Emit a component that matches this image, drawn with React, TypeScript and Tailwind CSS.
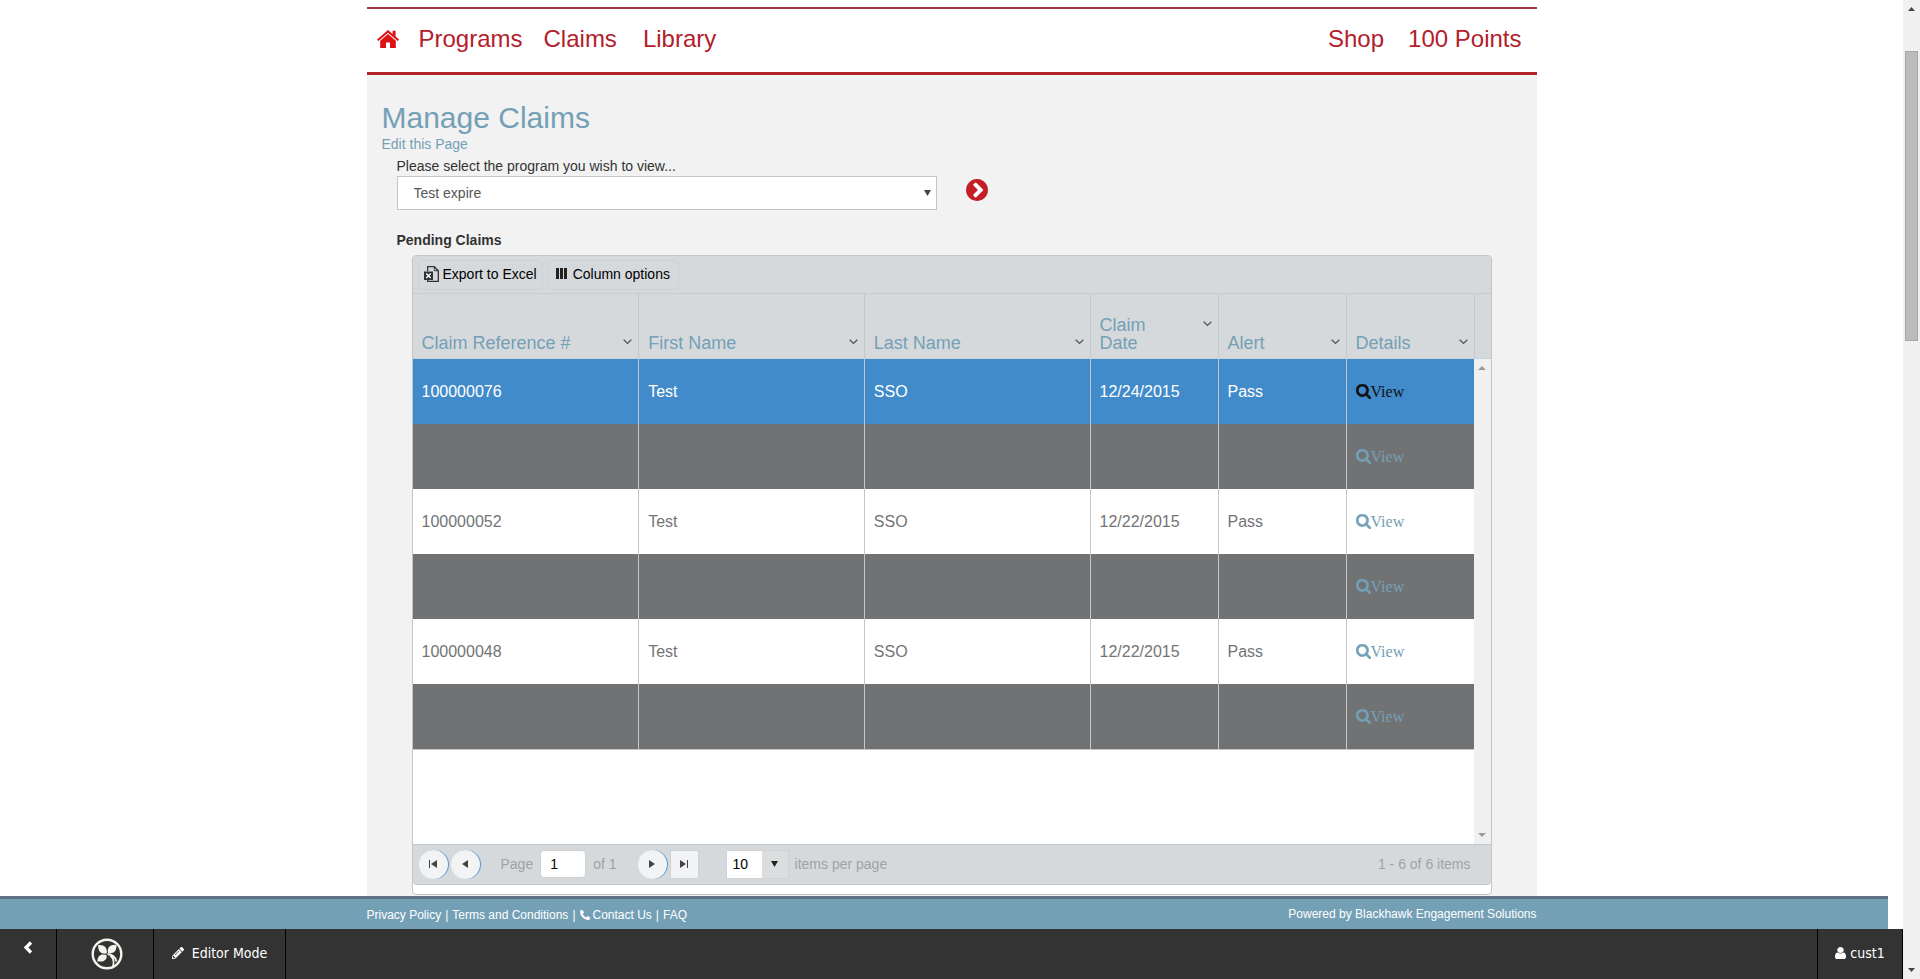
import React from "react";
import { FaPencilAlt, FaPhoneAlt } from "react-icons/fa";

type Claim = { ref: string; first: string; last: string; date: string; alert: string };

const claims: (Claim | null)[] = [
  { ref: "100000076", first: "Test", last: "SSO", date: "12/24/2015", alert: "Pass" },
  null,
  { ref: "100000052", first: "Test", last: "SSO", date: "12/22/2015", alert: "Pass" },
  null,
  { ref: "100000048", first: "Test", last: "SSO", date: "12/22/2015", alert: "Pass" },
  null,
];

const columns = ["Claim Reference #", "First Name", "Last Name", "Claim Date", "Alert", "Details"];

function HomeIcon() {
  return (
    <svg viewBox="0 0 22 18" className="h-[18px] w-[22px]" fill="currentColor" aria-hidden="true">
      <path d="M11 0 0 9.6l1.4 1.5L11 2.8l9.6 8.3L22 9.6l-3.4-3V.8h-3v3.3z" />
      <path d="M11 4 3.200 10.800V18h5.800v-5.500h4V18h5.800v-7.200z" />
    </svg>
  );
}

function GoIcon() {
  return (
    <svg viewBox="128 128 1536 1536" className="size-[22px]" fill="currentColor" aria-hidden="true">
      <circle cx="896" cy="896" r="650" fill="#fff" />
      <path d="M845 1395l454-454q19-19 19-45t-19-45l-454-454q-19-19-45-19t-45 19l-102 102q-19 19-19 45t19 45l307 307-307 307q-19 19-19 45t19 45l102 102q19 19 45 19t45-19zm819-499q0 209-103 385.5t-279.5 279.5-385.5 103-385.5-103-279.5-279.5-103-385.5 103-385.5 279.5-279.5 385.5-103 385.5 103 279.5 279.5 103 385.5z" />
    </svg>
  );
}

function SearchIcon() {
  return (
    <svg viewBox="0 128 1664 1664" className="size-[15px]" fill="currentColor" stroke="currentColor" strokeWidth="50" aria-hidden="true">
      <path d="M1152 832q0-185-131.5-316.5t-316.5-131.5-316.5 131.5-131.5 316.5 131.5 316.5 316.5 131.5 316.5-131.5 131.5-316.5zm512 832q0 52-38 90t-90 38q-54 0-90-38l-343-342q-179 124-399 124-143 0-273.5-55.5t-225-150-150-225-55.5-273.5 55.5-273.5 150-225 225-150 273.5-55.5 273.5 55.5 225 150 150 225 55.5 273.5q0 220-124 399l343 343q37 37 37 90z" />
    </svg>
  );
}

function UserIcon() {
  return (
    <svg viewBox="256 128 1280 1536" className="h-3 w-[11px]" preserveAspectRatio="none" fill="currentColor" aria-hidden="true">
      <path d="M1536 1399q0 109-62.5 187t-150.5 78h-854q-88 0-150.5-78t-62.5-187q0-85 8.5-160.5t31.5-152 58.5-131 94-89 134.5-34.5q131 128 313 128t313-128q76 0 134.5 34.5t94 89 58.5 131 31.5 152 8.5 160.5zm-256-887q0 159-112.5 271.5t-271.5 112.5-271.5-112.5-112.5-271.5 112.5-271.5 271.5-112.5 271.5 112.5 112.5 271.5z" />
    </svg>
  );
}

function ExcelIcon() {
  return (
    <svg viewBox="0 0 15 16" className="h-4 w-[15px]" fill="none" aria-hidden="true">
      <path d="M3.7 5V.7h6.6l4 4v10.6H3.7V14" stroke="#333" strokeWidth="1.3" />
      <path d="M10.3.7v4h4" stroke="#333" strokeWidth="1" />
      <rect y="5.5" width="9" height="8.5" fill="#333" />
      <path d="M2.3 7.5 6.7 12M6.7 7.5 2.3 12" stroke="#fff" strokeWidth="1.4" />
    </svg>
  );
}

function ColumnsIcon() {
  return (
    <svg viewBox="0 0 11 11" className="size-[11px]" fill="#222" aria-hidden="true">
      <path d="M0 0h3v11H0zM4 0h3v11H4zM8 0h3v11H8z" />
    </svg>
  );
}

function Caret() {
  return (
    <svg viewBox="0 0 9 6" className="h-[6px] w-[9px]" fill="none" stroke="#555" strokeWidth="1.4" aria-hidden="true">
      <path d="M.7.8 4.5 4.4 8.3.8" />
    </svg>
  );
}

function Triangle({ dir, className }: { dir: "up" | "down"; className: string }) {
  return (
    <svg viewBox="0 0 8 4" preserveAspectRatio="none" className={className} fill="currentColor" aria-hidden="true">
      <path d={dir === "up" ? "M0 4 4 0l4 4z" : "M0 0h8L4 4z"} />
    </svg>
  );
}

function PagerIcon({ d }: { d: string }) {
  return (
    <svg viewBox="0 0 8 8" className="size-2" fill="#444" aria-hidden="true">
      <path d={d} />
    </svg>
  );
}

function LeafLogo() {
  return (
    <svg viewBox="0 0 32 32" className="size-8" aria-hidden="true">
      <circle cx="16" cy="16" r="14.3" fill="none" stroke="#f4f4ee" strokeWidth="2.4" />
      <g fill="#f4f4ee">
        <path d="M15.800 15.600C10 16.500 6.800 13 7.200 7c6-.6 9.300 2.600 8.600 8.600z" />
        <path d="M17 15c-1.200-5.500 2-8.800 8.400-8.300.6 6-2.600 9.300-8.400 8.300z" />
        <path d="M15.500 17c.8 5.200-3 7.500-9.200 6.200.2-5.500 3.800-8 9.200-6.200z" />
      </g>
      <path d="M16.500 16c4.500.4 7.800 3 9 7.500M19.500 17.500c3.500 3.500 4 8 1.500 12.500" fill="none" stroke="#f4f4ee" strokeWidth="1.800" />
    </svg>
  );
}

const round = "flex size-[29px] items-center justify-center rounded-full bg-[#f1f3f5] shadow-[1px_0_0_#5b96cc]";
const square = "flex size-[29px] items-center justify-center rounded-[2px] border border-[#d0d2d4] bg-[#f1f3f5]";

export default function App() {
  return (
    <div className="flex min-h-screen bg-white font-['Liberation_Sans',Arial,sans-serif] text-sm text-[#333]">
      <div className="flex min-w-0 flex-1 flex-col">
        <div className="mx-auto flex w-full max-w-[1170px] flex-1 flex-col pt-[7px]">
          <nav className="flex h-[68px] items-center border-t-2 border-b-3 border-t-[#a03444] border-b-[#b4232a] px-[15px] pb-1 text-2xl text-[#b3202b]">
            <a href="#home" aria-label="Home" className="-ml-[5px] text-[#dc1216]">
              <HomeIcon />
            </a>
            <a href="#programs" className="ml-5">Programs</a>
            <a href="#claims" className="ml-[21px]">Claims</a>
            <a href="#library" className="ml-[26px]">Library</a>
            <a href="#shop" className="ml-auto">Shop</a>
            <a href="#points" className="ml-6">100 Points</a>
          </nav>

          <main className="flex-1 bg-[#f2f2f2] px-[15px] pt-[25px]">
            <h1 className="text-[30px] leading-9 text-[#74a0b6]">Manage Claims</h1>
            <a href="#edit" className="block leading-4 text-[#74a0b6]">Edit this Page</a>
            <div className="px-[15px] pt-1">
              <label htmlFor="program" className="block leading-5">Please select the program you wish to view...</label>
              <div className="flex items-center">
                <div className="relative w-[540px]">
                  <select id="program" className="block h-[34px] w-full appearance-none border border-[#c4c4c4] bg-white pl-4 text-[#555]">
                    <option>Test expire</option>
                  </select>
                  <Triangle dir="down" className="pointer-events-none absolute top-[14px] right-[6px] h-[6px] w-[7px] text-[#444]" />
                </div>
                <button type="button" aria-label="Go" className="mb-[6px] ml-[29px] text-[#c41f26]">
                  <GoIcon />
                </button>
              </div>
              <h2 className="pt-5 leading-5 font-bold">Pending Claims</h2>

              <section className="mx-[15px] mt-[5px] overflow-hidden rounded-[4px] border border-[#c5c5c7] bg-white pb-[9px]">
                <div className="flex h-[38px] items-center gap-1 border-b border-[#c8cbcd] bg-[#d6d9dc] px-[5px] text-black">
                  <button type="button" className="flex h-[30px] items-center gap-1 rounded-[4px] border border-[#cdd1d4] px-[5px] pb-[2px]">
                    <ExcelIcon />
                    Export to Excel
                  </button>
                  <button type="button" className="flex h-[30px] items-center gap-[6px] rounded-[4px] border border-[#cdd1d4] px-2 pb-[2px]">
                    <ColumnsIcon />
                    Column options
                  </button>
                </div>

                <div className="flex min-h-[550px] items-stretch">
                  <div className="min-w-0 flex-1">
                    <table className="w-full table-fixed border-separate border-spacing-0 border-b border-[#c5c5c5] text-left">
                      <colgroup>
                        <col />
                        <col />
                        <col />
                        <col className="w-32" />
                        <col className="w-32" />
                        <col className="w-32" />
                      </colgroup>
                      <thead>
                        <tr className="h-[65px] bg-[#d6d9dc]">
                          {columns.map((name) => (
                            <th
                              key={name}
                              className="border-b border-l border-b-[#c8d4dc] border-l-[#c5c8ca] pr-[6px] pb-[6px] pl-[9px] align-bottom text-lg leading-[18px] font-normal text-[#74a0b6] first:border-l-0"
                            >
                              <div className="flex items-start justify-between">
                                <span className={name === "Claim Date" ? "w-14" : "whitespace-nowrap"}>{name}</span>
                                <button type="button" aria-label={name + " menu"} className="flex h-4 items-center">
                                  <Caret />
                                </button>
                              </div>
                            </th>
                          ))}
                        </tr>
                      </thead>
                      <tbody>
                        {claims.map((c, i) => (
                          <tr
                            key={i}
                            className={
                              i === 0
                                ? "h-[65px] bg-[#428bca] text-base text-white"
                                : c
                                  ? "h-[65px] bg-white text-base text-[#727476]"
                                  : "h-[65px] bg-[#717274] text-base"
                            }
                          >
                            {[c?.ref, c?.first, c?.last, c?.date, c?.alert].map((v, j) => (
                              <td key={j} className="border-l border-[#c5c5c5] px-[9px] first:border-l-0">
                                {v}
                              </td>
                            ))}
                            <td className="border-l border-[#c5c5c5] px-[9px]">
                              <a
                                href="#view"
                                className={
                                  i === 0
                                    ? "flex items-center font-['Liberation_Serif',serif] text-[#111]"
                                    : "flex items-center font-['Liberation_Serif',serif] text-[#74a0b6]"
                                }
                              >
                                <SearchIcon />
                                View
                              </a>
                            </td>
                          </tr>
                        ))}
                      </tbody>
                    </table>
                  </div>
                  <div className="flex w-[17px] shrink-0 flex-col">
                    <div className="h-[65px] border-b border-l border-b-[#c8d4dc] border-l-[#c5c8ca] bg-[#d6d9dc]" />
                    <div className="flex flex-1 flex-col items-center justify-between bg-[#f0f0f0] py-[7px] text-[#999]">
                      <Triangle dir="up" className="h-1 w-2" />
                      <Triangle dir="down" className="h-1 w-2" />
                    </div>
                  </div>
                </div>

                <div className="flex h-[41px] items-center rounded-b-[4px] border-y border-[#c5c8ca] bg-[#d6d9dc] px-[6px] pb-px text-[#9fa2a5]">
                  <button type="button" aria-label="First page" className={round}>
                    <PagerIcon d="M0 0h1v8H0zM8 0v8L2 4z" />
                  </button>
                  <button type="button" aria-label="Previous page" className={round + " ml-[3px]"}>
                    <PagerIcon d="M7 0v8L1 4z" />
                  </button>
                  <label htmlFor="page" className="ml-[21px]">Page</label>
                  <input id="page" defaultValue="1" className="mx-[7px] h-[28px] w-[46px] rounded-[4px] border border-[#cfd1d3] bg-white pl-[9px] text-black" />
                  <span>of 1</span>
                  <button type="button" aria-label="Next page" className={round + " ml-[21px]"}>
                    <PagerIcon d="M1 0v8l6-4z" />
                  </button>
                  <button type="button" aria-label="Last page" className={square + " ml-[3px]"}>
                    <PagerIcon d="M7 0h1v8H7zM0 0v8l6-4z" />
                  </button>
                  <div className="relative ml-[27px] h-[29px] w-[63px] border border-[#cfd1d3]">
                    <select id="size" className="block size-full appearance-none bg-white pl-[6px] text-black">
                      <option>10</option>
                    </select>
                    <span className="pointer-events-none absolute inset-y-0 right-0 flex w-[26px] items-center justify-center bg-[#dcdddf] text-[#222]">
                      <Triangle dir="down" className="h-[6px] w-[7px]" />
                    </span>
                  </div>
                  <label htmlFor="size" className="ml-[6px]">items per page</label>
                  <span className="mr-[14px] ml-auto">1 - 6 of 6 items</span>
                </div>
              </section>
            </div>
          </main>
        </div>

        <footer className="mr-[15px] h-[33px] border-t-3 border-[#5f7283] bg-[#74a0b6] pl-[15px] text-xs text-white">
          <div className="mx-auto flex w-full max-w-[1170px] items-start justify-between pt-2 leading-[14px]">
            <div className="flex items-center gap-1 pt-px">
              <a href="#privacy">Privacy Policy</a>|<a href="#terms">Terms and Conditions</a>|
              <a href="#contact" className="flex items-center gap-[3px]">
                <FaPhoneAlt className="size-[10px]" aria-hidden="true" />
                Contact Us
              </a>
              |<a href="#faq">FAQ</a>
            </div>
            <span>Powered by Blackhawk Engagement Solutions</span>
          </div>
        </footer>

        <div className="flex h-[50px] border-r border-black bg-[#333] font-['DejaVu_Sans_Condensed','Noto_Sans',sans-serif] text-sm text-white">
          <button type="button" aria-label="Collapse" className="flex w-[57px] justify-center border-r border-black pt-[12px]">
            <svg viewBox="0 0 10 13" className="h-[13px] w-[10px]" fill="none" stroke="#fff" strokeWidth="3.2" aria-hidden="true">
              <path d="M8 1.500 3 6.500 8 11.500" />
            </svg>
          </button>
          <a href="#dashboard" aria-label="Dashboard" className="flex w-[97px] items-center justify-center border-r border-black pl-[3px]">
            <LeafLogo />
          </a>
          <button type="button" className="flex w-[132px] items-center justify-center gap-2 border-r border-black pb-[2px]">
            <FaPencilAlt className="size-3" aria-hidden="true" />
            Editor Mode
          </button>
          <button type="button" className="ml-auto flex w-[85px] items-center justify-center gap-1 border-l border-black pb-[2px]">
            <UserIcon />
            cust1
          </button>
        </div>
      </div>

      <div className="flex w-[17px] shrink-0 flex-col items-center bg-[#f0f0f0] py-[7px] text-[#444]">
        <Triangle dir="up" className="h-1 w-[7px]" />
        <div className="mt-10 h-[290px] w-[13px] border border-[#a8a8a8] bg-[#bcbcbc]" />
        <Triangle dir="down" className="mt-auto h-1 w-[7px]" />
      </div>
    </div>
  );
}
